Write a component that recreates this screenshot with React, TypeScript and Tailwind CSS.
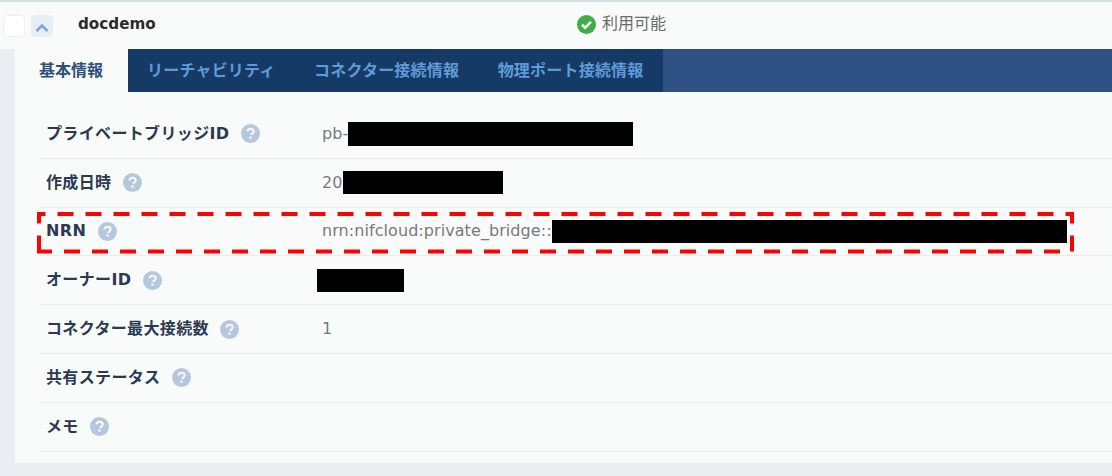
const sans = { fontFamily: '"DejaVu Sans", "Noto Sans CJK JP", sans-serif' }

function Help() {
  return (
    <svg className="ml-[11.5px] shrink-0" width="19" height="19" viewBox="0 0 19 19">
      <circle cx="9.5" cy="9.5" r="9.5" fill="#b5c7dc" />
      <path d="M6.4 7.4c.2-1.7 1.5-2.7 3.2-2.7 1.8 0 3.1 1 3.1 2.6 0 1.2-.7 1.8-1.5 2.3-.7.5-1 .8-1 1.5" fill="none" stroke="#f9fbfb" strokeWidth="2" />
      <rect x="8.4" y="12.4" width="2.2" height="2.2" fill="#f9fbfb" />
    </svg>
  )
}

type Row = { label: string; value?: string; boxClass?: string }

const rows: Row[] = [
  { label: 'プライベートブリッジID', value: 'pb-', boxClass: 'w-[285px] h-[24px]' },
  { label: '作成日時', value: '20', boxClass: 'w-[160px] h-[23px]' },
  { label: 'NRN', value: 'nrn:nifcloud:private_bridge::', boxClass: 'w-[515px] h-[23px]' },
  { label: 'オーナーID', boxClass: 'w-[87px] h-[23px] -ml-[5px]' },
  { label: 'コネクター最大接続数', value: '1' },
  { label: '共有ステータス' },
  { label: 'メモ' },
]

const tabs = ['リーチャビリティ', 'コネクター接続情報', '物理ポート接続情報']

function App(): JSX.Element {
  return (
    <div className="relative w-[1112px] h-[476px] overflow-hidden bg-[#eaeef2]" style={sans}>
      <div className="h-[49px] bg-[#f9fbfb] border-t-2 border-[#d5dfe9] flex items-center">
        <div className="ml-[3px] w-[22px] h-[22px] rounded-[4px] bg-white border border-[#eef0f2]" />
        <div className="ml-[6px] w-[22px] h-[22px] rounded-[4px] bg-[#e9eef4] flex items-center justify-center">
          <svg width="14" height="14" viewBox="0 0 14 14" className="mt-[4px]">
            <path d="M1.5 10 7 4.5 12.5 10" fill="none" stroke="#7ba6dd" strokeWidth="2.6" />
          </svg>
        </div>
        <div className="ml-[25px] -mt-[2px] w-[499px] text-[15.2px] font-bold text-[#2b2b2b]">docdemo</div>
        <svg className="-mt-[3px]" width="19" height="19" viewBox="0 0 19 19">
          <circle cx="9.5" cy="9.5" r="9.5" fill="#3fae49" />
          <path d="M5 9.8 8.2 12.8 14 6.9" fill="none" stroke="#fff" strokeWidth="2.6" />
        </svg>
        <span className="ml-[6px] -mt-[3px] text-[16px] text-[#6b6b6b]">利用可能</span>
      </div>

      <div className="ml-[15px] h-[414px] bg-[#f9fbfb]">
        <div className="flex h-[43px] bg-[#2f5082]">
          <div className="w-[113px] pl-[24px] flex items-center text-[16px] font-bold text-[#2f5078] bg-[#f9fbfb]">基本情報</div>
          <div className="flex w-[535px] bg-[#163a66] text-[16px] tracking-[0.2px] font-bold text-[#5f9ad9] items-center pl-[19px] gap-[38.5px]">
            {tabs.map((tab) => (
              <span key={tab}>{tab}</span>
            ))}
          </div>
        </div>

        <div className="ml-[25px] pt-[18px]">
          {rows.map((row) => (
            <div key={row.label} className="flex items-center h-[48.8px] border-b-[1.5px] border-[#e8eaeb]">
              <div className="w-[282px] pl-[6px] flex items-center text-[16px] tracking-[0.35px] font-bold text-[#2a3a52]">
                <span>{row.label}</span>
                <Help />
              </div>
              <div className="flex items-center text-[16px] tracking-[0.07px] text-[#777a7c]">
                {row.value && <span>{row.value}</span>}
                {row.boxClass && <div className={`bg-black ${row.boxClass}`} />}
              </div>
            </div>
          ))}
        </div>
      </div>

      {/* red callout drawn on top of the NRN row */}
      <svg className="absolute left-[36px] top-[210px]" width="1040" height="45" viewBox="0 0 1040 45">
        <path d="M3 41.5V4H1036V41.5Z" fill="none" stroke="#ff0000" strokeWidth="4" strokeDasharray="16 12" />
      </svg>
    </div>
  )
}

export default App
